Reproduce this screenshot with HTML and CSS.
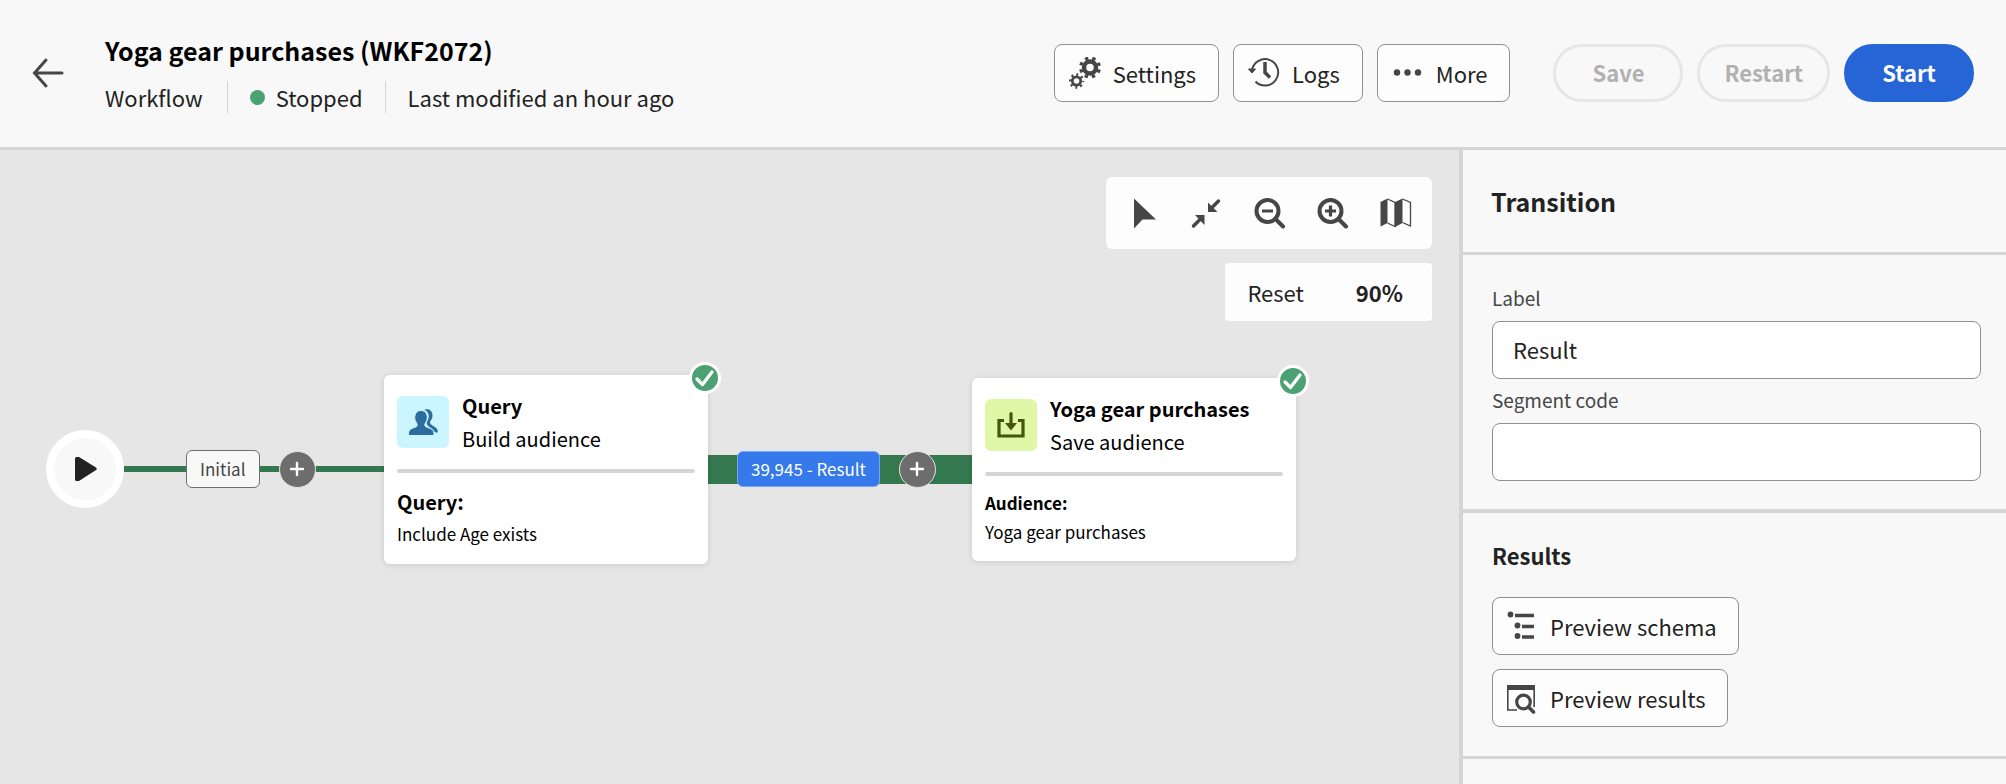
FILE: index.html
```html
<!DOCTYPE html>
<html lang="en">
<head>
<meta charset="utf-8">
<title>Yoga gear purchases (WKF2072)</title>
<link rel="stylesheet" href="styles.css">
</head>
<body>
<header class="topbar">
  <button class="back" aria-label="Back">
    <svg width="32" height="34" viewBox="0 0 32 34" fill="none" stroke="#464646" stroke-width="3" stroke-linecap="round"><path d="M2.500 17H30M14 4 2.500 17 14 30"/></svg>
  </button>
  <div class="heading">
    <h1 class="title">Yoga gear purchases (WKF2072)</h1>
    <div class="meta">
      <span class="meta-item">Workflow</span>
      <span class="meta-item status"><span class="dot"></span>Stopped</span>
      <span class="meta-item">Last modified an hour ago</span>
    </div>
  </div>
  <div class="actions">
    <button class="btn">
      <svg width="32" height="32" viewBox="0 0 32 32" fill="none" stroke="#464646"><circle cx="21" cy="10.500" r="6" stroke-width="4.500"/><circle cx="21" cy="10.500" r="9.300" stroke-width="3.400" stroke-dasharray="3.300 4" stroke-dashoffset="-2"/><circle cx="7.500" cy="24" r="4.200" stroke-width="2.800"/><circle cx="7.500" cy="24" r="6.400" stroke-width="2.600" stroke-dasharray="2 3.030" stroke-dashoffset="1"/></svg>
      Settings
    </button>
    <button class="btn">
      <svg width="32" height="32" viewBox="0 0 32 32" fill="none" stroke="#464646" stroke-width="2"><path d="M4 13A13.200 13.200 0 1 1 7.500 24.500"/><path d="M.5 12h7L4 16z" fill="#464646" stroke-width="1"/><path d="M17 5v10.500l5 5" stroke-width="3.500"/></svg>
      Logs
    </button>
    <button class="btn">
      <svg width="32" height="32" viewBox="0 0 32 32" fill="#464646"><circle cx="5" cy="15.500" r="3.200"/><circle cx="15.500" cy="15.500" r="3.200"/><circle cx="26" cy="15.500" r="3.200"/></svg>
      More
    </button>
  </div>
  <div class="run-actions">
    <button class="pill" disabled>Save</button>
    <button class="pill" disabled>Restart</button>
    <button class="pill primary">Start</button>
  </div>
</header>
<div class="workspace">
  <main class="canvas">
    <div class="tools">
      <div class="toolbar">
        <button class="tool" aria-label="Select"><svg width="32" height="32" viewBox="0 0 32 32"><path d="M6 1.500v30l8.500-9H28z" fill="#464646"/></svg></button>
        <button class="tool" aria-label="Fit to screen"><svg width="32" height="32" viewBox="0 0 32 32" fill="#464646" stroke="#464646"><path d="M27.500 4 20 11.500M2.500 29l8-8" stroke-width="3.500" stroke-linecap="round"/><path d="M17 5.500V15h9.500zM13.500 28V18H4z" stroke="none"/></svg></button>
        <button class="tool" aria-label="Zoom out"><svg width="32" height="32" viewBox="0 0 32 32" fill="none" stroke="#464646" stroke-width="4"><circle cx="13.500" cy="14" r="11"/><path d="M8 14h11" stroke-width="3"/><path d="m21.500 22 7.500 7.500" stroke-linecap="round"/></svg></button>
        <button class="tool" aria-label="Zoom in"><svg width="32" height="32" viewBox="0 0 32 32" fill="none" stroke="#464646" stroke-width="4"><circle cx="13.500" cy="14" r="11"/><path d="M8 14h11M13.500 8.500v11" stroke-width="3.200"/><path d="m21.500 22 7.500 7.500" stroke-linecap="round"/></svg></button>
        <button class="tool" aria-label="Map"><svg width="32" height="32" viewBox="0 0 32 32" fill="#464646"><path d="M.5 5 7.500 1.500V26L.5 29.500zM15 5l7.500-3.500V26L15 30z"/><path d="m7.500 2 7.500 3.500v24L7.500 26M22.500 2l8 3.500V29l-8-3.500" fill="none" stroke="#464646" stroke-width="1.300"/></svg></button>
      </div>
      <div class="zoom"><button class="reset">Reset</button><output class="level">90%</output></div>
    </div>
    <div class="flow">
      <div class="play"><svg width="22" height="24" viewBox="0 0 22 24"><path d="M1.500 0H4l17 10.500q1.500 1.500 0 2.500L4 24H1.500Q0 24 0 22.500v-21Q0 0 1.500 0z" fill="#222"/></svg></div>
      <div class="link link-initial">
        <button class="tag">Initial</button>
        <button class="add" aria-label="Add activity"><svg width="16" height="16" viewBox="0 0 16 16" stroke="#fff" stroke-width="2.400" stroke-linecap="round"><path d="M8 2v12M2 8h12"/></svg></button>
      </div>
      <article class="card">
        <span class="check"><svg width="26" height="26" viewBox="0 0 26 26"><circle cx="13" cy="13" r="13" fill="#4ba173"/><path d="m5 14 5.500 5.500L20 7" fill="none" stroke="#fff" stroke-width="3.300" stroke-linecap="round" stroke-linejoin="round"/></svg></span>
        <div class="card-head">
          <span class="card-icon audience"><svg width="32" height="32" viewBox="0 0 32 32" fill="#2b6d9e"><path d="M17 4c5-2 8.500 1 8.500 5.500 0 4-2.500 5-2.500 7 0 3 5.500 3.500 7 6.500.6 1 .8 2.500.8 3.500-2 0-3-.5-4-1.500-1.500-3.500-7-4-7-8 0-2 2-3.500 2-6.500 0-3.500-2-6-4.800-6.500z"/><path d="M14 4.500c4 0 6.300 3.200 6.300 7.300 0 3.800-2.500 5-2.500 7.200 0 3.500 9 2 9.200 8v2.500H1.500V27c.3-6 8.700-4.500 8.700-8 0-2.200-2.500-3.400-2.500-7.200 0-4.100 2.300-7.300 6.300-7.300z" stroke="#ccf6ff" stroke-width="1"/></svg></span>
          <div><h2 class="card-title">Query</h2><p class="card-sub">Build audience</p></div>
        </div>
        <hr class="rule">
        <h3 class="card-key">Query:</h3>
        <p class="card-value">Include Age exists</p>
      </article>
      <div class="link link-result">
        <button class="tag selected">39,945 - Result</button>
        <button class="add" aria-label="Add activity"><svg width="16" height="16" viewBox="0 0 16 16" stroke="#fff" stroke-width="2.400" stroke-linecap="round"><path d="M8 2v12M2 8h12"/></svg></button>
      </div>
      <article class="card">
        <span class="check"><svg width="26" height="26" viewBox="0 0 26 26"><circle cx="13" cy="13" r="13" fill="#4ba173"/><path d="m5 14 5.500 5.500L20 7" fill="none" stroke="#fff" stroke-width="3.300" stroke-linecap="round" stroke-linejoin="round"/></svg></span>
        <div class="card-head">
          <span class="card-icon save"><svg width="32" height="32" viewBox="0 0 32 32" fill="none" stroke="#47540f" stroke-width="3.200"><path d="M9 11.500H4V27h24V11.500h-5"/><path d="M16 4.500V15" stroke-linecap="round"/><path d="M10 14h12l-6 7.500z" fill="#47540f" stroke="none"/></svg></span>
          <div><h2 class="card-title">Yoga gear purchases</h2><p class="card-sub">Save audience</p></div>
        </div>
        <hr class="rule">
        <h3 class="card-key small">Audience:</h3>
        <p class="card-value small">Yoga gear purchases</p>
      </article>
    </div>
  </main>
  <aside class="panel">
    <h2 class="panel-title">Transition</h2>
    <section class="section fields">
      <label class="label" for="label">Label</label>
      <input class="input" id="label" type="text" value="Result">
      <label class="label" for="code">Segment code</label>
      <input class="input" id="code" type="text">
    </section>
    <section class="section results">
      <h3 class="section-title">Results</h3>
      <button class="btn">
        <svg width="32" height="32" viewBox="0 0 32 32" fill="none" stroke="#464646" stroke-width="3.600"><path d="M9 5.500h19M16 16.500h12M16 27h12"/><g fill="#464646" stroke="none"><circle cx="4.500" cy="4.500" r="2.900"/><circle cx="11.500" cy="15.500" r="2.900"/><circle cx="11.500" cy="26" r="2.900"/></g></svg>
        Preview schema
      </button>
      <button class="btn">
        <svg width="32" height="32" viewBox="0 0 32 32" fill="none" stroke="#464646"><path d="M1 3h28v5H1z" fill="#464646" stroke="none"/><path d="M1.800 7v21H11M28.200 7v18" stroke-width="1.600"/><circle cx="17.500" cy="20" r="6.800" stroke-width="3.200"/><path d="m22.500 25 5 5" stroke-width="3.600" stroke-linecap="round"/></svg>
        Preview results
      </button>
    </section>
  </aside>
</div>
</body>
</html>
```
FILE: styles.css
```css
* { box-sizing: border-box; }
body {
  margin: 0;
  min-height: 100vh;
  display: flex;
  flex-direction: column;
  background: #f8f8f8;
  color: #222;
  font-family: "Noto Sans CJK SC", "Noto Sans", sans-serif;
  font-size: 22px;
  line-height: 32px;
}
h1, h2, h3, p { margin: 0; }
button { font: inherit; color: inherit; cursor: pointer; }
svg { display: block; flex: none; }

.topbar {
  display: flex;
  align-items: center;
  height: 150px;
  padding: 0 32px 2px;
  border-bottom: 3px solid #d5d5d5;
}
.back { padding: 0; border: 0; background: none; }
.heading { margin-left: 41px; flex: 1; }
.title { font-size: 25px; line-height: 36px; font-weight: 700; color: #000; margin-bottom: 13px; }
.meta { display: flex; }
.meta-item { padding: 0 22px; border-left: 1px solid #d5d5d5; }
.meta-item:first-child { padding-left: 0; padding-right: 24px; border-left: 0; }
.status { display: flex; align-items: center; gap: 11px; }
.dot { width: 15px; height: 15px; border-radius: 50%; background: #4ba173; }
.actions, .run-actions { display: flex; gap: 14px; }
.run-actions { margin-left: 43px; }

.btn {
  display: inline-flex;
  align-items: center;
  gap: 12px;
  height: 58px;
  padding: 0 21px 0 13px;
  border: 1px solid #909090;
  border-radius: 8px;
  background: #fdfdfd;
}
.actions .btn { padding-right: 22px; padding-left: 14px; }
.pill {
  height: 58px;
  min-width: 130px;
  padding: 0 24px 2px;
  border: 3px solid #e6e6e6;
  border-radius: 29px;
  background: none;
  color: #b1b1b1;
  font-weight: 700;
}
.pill.primary { border-color: #2665d6; background: #2665d6; color: #fff; }

.workspace { flex: 1; display: flex; }
.canvas {
  position: relative;
  flex: 1;
  display: flex;
  align-items: center;
  padding: 4px 0 0 46px;
  background: #e6e6e6;
}
.tools {
  position: absolute;
  top: 27px;
  right: 27px;
  display: flex;
  flex-direction: column;
  align-items: flex-end;
  gap: 14px;
}
.toolbar { display: flex; gap: 31px; padding: 20px 20px 20px 22px; background: #fdfdfd; border-radius: 6px; }
.tool { padding: 0; border: 0; background: none; }
.zoom {
  display: flex;
  align-items: center;
  gap: 52px;
  height: 58px;
  padding: 0 29px 0 22px;
  background: #fdfdfd;
  border-radius: 4px;
}
.reset { padding: 0; border: 0; background: none; }
.level { font-weight: 700; }

.flow { display: flex; align-items: center; }
.play {
  display: flex;
  align-items: center;
  justify-content: center;
  width: 78px;
  height: 78px;
  padding-left: 2px;
  border: 8px solid #fff;
  border-radius: 50%;
  background: #f8f8f8;
}
.link { display: flex; align-items: center; background: linear-gradient(#33784f, #33784f) center / 100% 29px no-repeat; }
.link-initial { width: 260px; padding-left: 62px; background-size: 100% 6px; }
.link-result { width: 264px; padding-left: 29px; }
.tag {
  height: 38px;
  padding: 0 13px;
  border: 1px solid #6e6e6e;
  border-radius: 6px;
  background: #f8f8f8;
  color: #464646;
  font-size: 17px;
  line-height: 24px;
  white-space: nowrap;
}
.tag.selected { height: 36px; border-color: #78a8f0; background: #3579ea; color: #fff; }
.add {
  display: flex;
  align-items: center;
  justify-content: center;
  width: 37px;
  height: 37px;
  margin-left: 19px;
  padding: 0;
  border: 1px solid #e6e6e6;
  border-radius: 50%;
  background: #6d6d6d;
}
.card {
  position: relative;
  width: 324px;
  padding: 14px 13px 15px;
  border-radius: 6px;
  background: #fff;
  color: #000;
  box-shadow: 0 1px 6px rgba(0, 0, 0, 0.12);
}
.check {
  position: absolute;
  top: -13px;
  right: -13px;
  padding: 3px;
  border-radius: 50%;
  background: #fff;
}
.card-head { display: flex; align-items: center; gap: 13px; }
.card-icon {
  display: flex;
  align-items: center;
  justify-content: center;
  width: 52px;
  height: 52px;
  border-radius: 6px;
}
.audience { background: #ccf6ff; }
.save { background: #dff8a8; }
.card-title { font-size: 20px; line-height: 33px; font-weight: 700; }
.card-sub { font-size: 20px; line-height: 34px; }
.rule { height: 4px; margin: 13px 0; border: 0; border-radius: 2px; background: #d5d5d5; }
.card-key { font-size: 20px; line-height: 32px; font-weight: 700; }
.card-value { font-size: 17px; line-height: 31px; }
.card-key.small { font-size: 17px; line-height: 28px; }
.card-value.small { line-height: 29px; }

.panel { width: 547px; border-left: 4px solid #d5d5d5; }
.panel-title {
  padding: 33px 28px;
  border-bottom: 3px solid #d5d5d5;
  font-size: 25px;
  line-height: 36px;
  font-weight: 700;
}
.section { padding: 26px 25px 28px 29px; border-bottom: 4px solid #d5d5d5; }
.fields { display: flex; flex-direction: column; }
.label { font-size: 19px; line-height: 34px; color: #464646; padding-bottom: 6px; }
.input {
  width: 100%;
  height: 58px;
  padding: 0 20px 2px;
  border: 1px solid #909090;
  border-radius: 8px;
  background: #fff;
  color: #222;
  font: inherit;
}
.input + .label { padding-top: 4px; }
.results { display: flex; flex-direction: column; align-items: flex-start; gap: 14px; padding-bottom: 29px; border-bottom-width: 3px; }
.section-title { font-size: 22px; line-height: 32px; font-weight: 700; margin-bottom: 12px; }
```
